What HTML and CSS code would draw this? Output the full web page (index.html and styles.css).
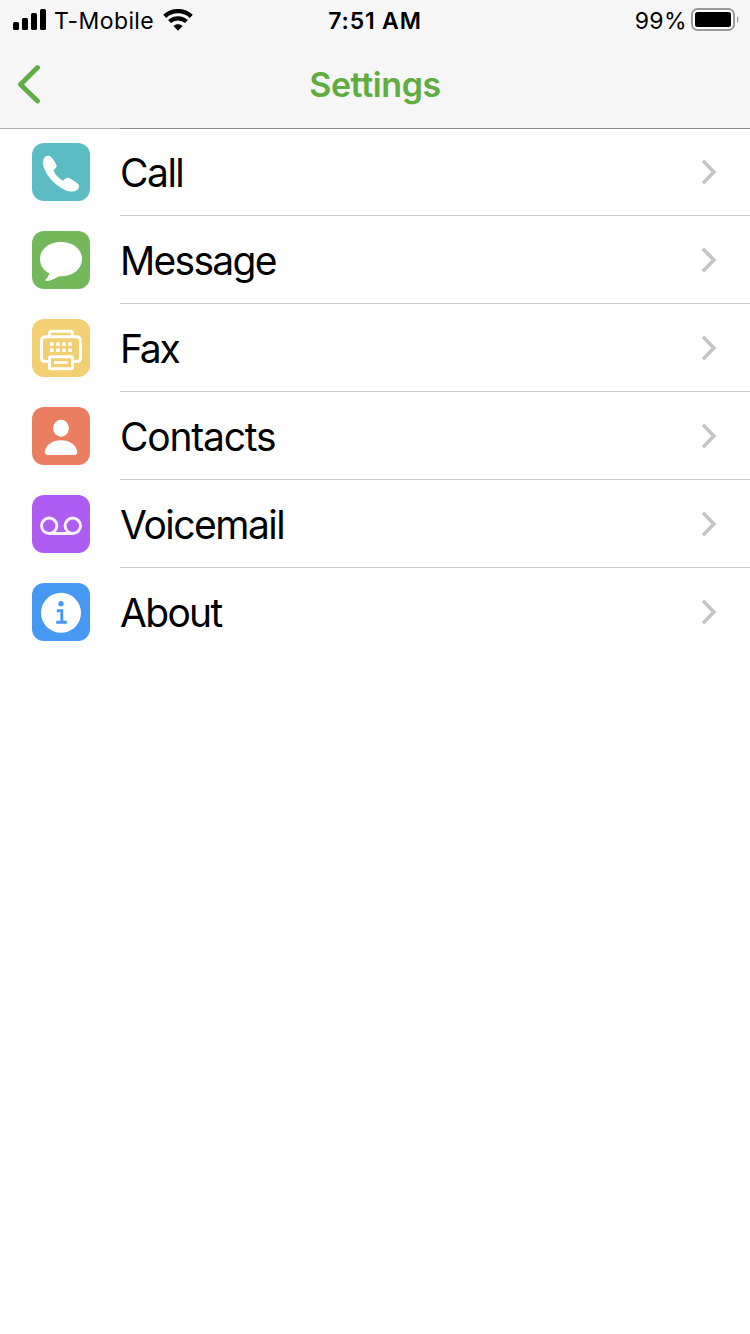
FILE: index.html
```html
<!DOCTYPE html>
<html lang="en">
<head>
    <meta charset="UTF-8">
    <meta name="viewport" content="width=device-width, initial-scale=1.0">
    <title>Settings</title>
    <link rel="stylesheet" href="styles.css">
</head>
<body>
    <header class="top">
        <div class="status-bar">
            <div class="status-left">
                <svg class="signal" width="34" height="22" viewBox="0 0 34 22">
                    <rect x="0" y="13" width="6" height="8" rx="1.5"/>
                    <rect x="9" y="9" width="6" height="12" rx="1.5"/>
                    <rect x="18" y="4" width="6" height="17" rx="1.5"/>
                    <rect x="27" y="0" width="6" height="21" rx="1.5"/>
                </svg>
                <span class="carrier">T-Mobile</span>
                <svg class="wifi" width="30" height="22" viewBox="0 0 30 22">
                    <path d="M1.700 7.400C9 .4 21 .4 28.300 7.400" fill="none" stroke="#000" stroke-width="4.400"/>
                    <path d="M6.500 12.600C11 8.200 19 8.200 23.500 12.600" fill="none" stroke="#000" stroke-width="4.200"/>
                    <path d="M10.400 17C13 14.500 17 14.500 19.600 17L15 21.700Z"/>
                </svg>
            </div>
            <span class="time">7:51 AM</span>
            <div class="status-right">
                <span class="percent">99%</span>
                <svg class="battery" width="49" height="24" viewBox="0 0 49 24">
                    <rect x="1" y="1" width="42" height="21" rx="5.500" fill="#fff" stroke="#9a9a9a" stroke-width="2"/>
                    <rect x="4" y="4" width="36" height="15" rx="2.500"/>
                    <path d="M46 8.200C48 9 48 14 46 14.800Z" fill="#9a9a9a"/>
                </svg>
            </div>
        </div>
        <nav class="nav-bar">
            <svg class="back" width="24" height="40" viewBox="0 0 24 40">
                <path d="M21.500 3.500L4.500 20.500L21.500 37" fill="none" stroke="#5fad41" stroke-width="4.800" stroke-linecap="round" stroke-linejoin="round"/>
            </svg>
            <h1 class="title">Settings</h1>
        </nav>
    </header>

    <ul class="menu">
        <li class="row">
            <svg class="icon call" viewBox="0 0 58 58">
                <path fill="#fff" d="M12.500 14.500C14 12.500 16.500 12 18.500 13.500C21 15.500 23 19 24.500 22C25.400 24 23 25.500 21.500 27.500C23 31.500 27 35.500 31 37.700C33 36 34.500 33.800 37 35C40 36.500 43.500 38.700 46 41C48 43 47 45.500 45 47C42 49.300 37.500 49 33 47C22.500 42 14.500 33 11.500 23.500C10.400 20 10.500 17 12.500 14.500Z"/>
            </svg>
            <div class="cell">
                <span class="label l-call">Call</span>
                <svg class="chevron" width="16" height="26" viewBox="0 0 16 26"><path d="M3 3L13 13L3 23"/></svg>
            </div>
        </li>
        <li class="row">
            <svg class="icon message" viewBox="0 0 58 58">
                <path fill="#fff" d="M29 11C41 11 50 18 50 28C50 38 41 45.300 29 45.300C27.500 45.300 26.500 45.600 25 46.300C22 48.300 18 50 14.600 50C13.300 50 13 49 14 48C15.800 46.500 16.800 44.800 17.300 42.300C11.500 39.500 8 34.500 8 28C8 18 17 11 29 11Z"/>
            </svg>
            <div class="cell">
                <span class="label l-message">Message</span>
                <svg class="chevron" width="16" height="26" viewBox="0 0 16 26"><path d="M3 3L13 13L3 23"/></svg>
            </div>
        </li>
        <li class="row">
            <svg class="icon fax" viewBox="0 0 58 58">
                <g fill="none" stroke="#fff" stroke-width="3" stroke-linejoin="round">
                    <path d="M17.500 17V14.500Q17.500 12.300 20 12.300H38Q40.500 12.300 40.500 14.500V17"/>
                    <path d="M17 42.500H13.500Q9.500 42.500 9.500 38.500V22Q9.500 17.800 14 17.800H44Q48.500 17.800 48.500 22V38.500Q48.500 42.500 44.500 42.500H41"/>
                    <rect x="17.500" y="37.700" width="23" height="12" rx="1.500"/>
                    <path d="M22 43.500H36" stroke-width="2.500"/>
                </g>
                <g fill="none" stroke="#fff" stroke-width="3.600" stroke-dasharray="3.600 2.500">
                    <path d="M18 25H40"/>
                    <path d="M18 31.300H40"/>
                </g>
            </svg>
            <div class="cell">
                <span class="label l-fax">Fax</span>
                <svg class="chevron" width="16" height="26" viewBox="0 0 16 26"><path d="M3 3L13 13L3 23"/></svg>
            </div>
        </li>
        <li class="row">
            <svg class="icon contacts" viewBox="0 0 58 58">
                <ellipse cx="29" cy="21.300" rx="7.800" ry="8.500" fill="#fff"/>
                <path fill="#fff" d="M16 48C13.500 48 12.500 46.700 12.800 44.500C13.800 38 20.500 33.300 29 33.300C37.500 33.300 44.200 38 45.200 44.500C45.500 46.700 44.500 48 42 48Z"/>
            </svg>
            <div class="cell">
                <span class="label l-contacts">Contacts</span>
                <svg class="chevron" width="16" height="26" viewBox="0 0 16 26"><path d="M3 3L13 13L3 23"/></svg>
            </div>
        </li>
        <li class="row">
            <svg class="icon voicemail" viewBox="0 0 58 58">
                <g fill="none" stroke="#fff" stroke-width="3" opacity=".92">
                    <circle cx="17.200" cy="30.800" r="7.700"/>
                    <circle cx="40.800" cy="30.800" r="7.700"/>
                    <path d="M17.200 38.500H40.800"/>
                </g>
            </svg>
            <div class="cell">
                <span class="label l-voicemail">Voicemail</span>
                <svg class="chevron" width="16" height="26" viewBox="0 0 16 26"><path d="M3 3L13 13L3 23"/></svg>
            </div>
        </li>
        <li class="row">
            <svg class="icon about" viewBox="0 0 58 58">
                <circle cx="29" cy="29.800" r="20" fill="#fff"/>
                <circle cx="29" cy="20.700" r="2.700" fill="#4698f3"/>
                <path d="M24.800 27.700H29.800V39.200M24.200 39.300H34.800" fill="none" stroke="#4698f3" stroke-width="2.900"/>
            </svg>
            <div class="cell">
                <span class="label l-about">About</span>
                <svg class="chevron" width="16" height="26" viewBox="0 0 16 26"><path d="M3 3L13 13L3 23"/></svg>
            </div>
        </li>
    </ul>
</body>
</html>
```

FILE: styles.css
```css
* {
    box-sizing: border-box;
    margin: 0;
    padding: 0;
}

body {
    width: 750px;
    min-height: 1334px;
    background: #fff;
    color: #000;
    font-family: Inter, "Liberation Sans", sans-serif;
    overflow: hidden;
}

svg {
    display: block;
    flex-shrink: 0;
}

/* header lies 1px over the list so the two lines blend */
.top {
    position: relative;
    z-index: 1;
    height: 129px;
    margin-bottom: -1px;
    background: #f6f6f6;
    background-clip: padding-box;
    border-bottom: 1px solid rgba(0, 0, 0, 0.3);
}

.status-bar {
    display: grid;
    grid-template-columns: 1fr auto 1fr;
    align-items: center;
    height: 40px;
    padding: 0 10px 0 13px;
    font-size: 23px;
}

.status-bar span {
    padding-top: 2px;
    line-height: 38px;
}

.status-left,
.status-right {
    display: flex;
    align-items: center;
}

.status-right {
    justify-content: flex-end;
}

.signal {
    margin-right: 7px;
}

.carrier {
    width: 100px;
    margin-right: 9px;
    letter-spacing: 0.4px;
    white-space: nowrap;
}

.time {
    margin-right: 3px;
    font-weight: 600;
    letter-spacing: 0.8px;
}

.percent {
    margin-right: 4px;
    letter-spacing: 0.4px;
}

.nav-bar {
    display: grid;
    grid-template-columns: 1fr auto 1fr;
    align-items: center;
    height: 88px;
    padding: 0 16px;
}

.title {
    padding-top: 1px;
    color: #5fad41;
    font-size: 34px;
    font-weight: 600;
    line-height: 87px;
    letter-spacing: -0.4px;
}

.menu {
    list-style: none;
}

.row {
    display: flex;
    align-items: center;
    height: 88px;
    padding-left: 32px;
}

.icon {
    width: 58px;
    height: 58px;
    margin-right: 30px;
    border-radius: 12px;
}

.call { background: #5bbdc3; }
.message { background: #73b95c; }
.fax { background: #f2cf72; }
.contacts { background: #eb7e60; }
.voicemail { background: #af5cf3; }
.about { background: #4698f3; }

.cell {
    flex: 1;
    display: flex;
    align-items: center;
    justify-content: space-between;
    height: 88px;
    padding-right: 33px;
    border-bottom: 1px solid #c8c8c8;
}

.row:first-child .cell {
    border-top: 1px solid #c8c8c8;
}

.row:last-child .cell {
    border-bottom-color: transparent;
}

.label {
    padding-top: 2px;
    font-size: 39px;
    line-height: 80px;
}

/* tracking per word */
.l-call { letter-spacing: -1.5px; }
.l-message { letter-spacing: -1.7px; }
.l-fax { letter-spacing: -2.2px; }
.l-contacts { letter-spacing: -1.2px; }
.l-voicemail { letter-spacing: -1.5px; }
.l-about { letter-spacing: -1.7px; }

.chevron path {
    fill: none;
    stroke: #c5c5c7;
    stroke-width: 3.8;
    stroke-linecap: round;
    stroke-linejoin: round;
}
```
